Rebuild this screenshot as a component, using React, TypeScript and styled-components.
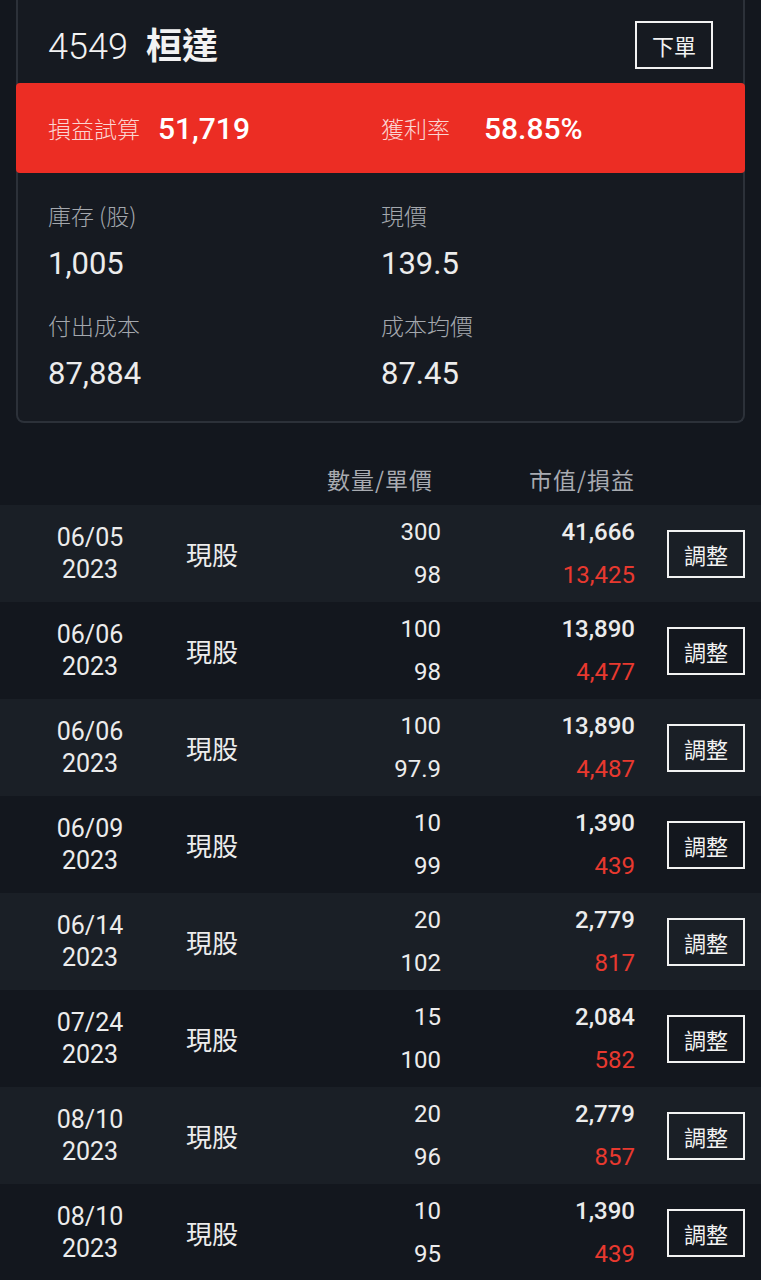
import styled, {createGlobalStyle} from "styled-components";

const GlobalStyle = createGlobalStyle`
    html, body {
        margin: 0;
        padding: 0;
        background: #13171e;
    }
    body {
        font-family: Roboto, "Noto Sans CJK TC", sans-serif;
        color: #f2f2f2;
    }
`

const Page = styled.div`
    width: 761px;
    height: 1280px;
    overflow: hidden;
    background: #13171e;
`

const Card = styled.div`
    margin: 0 16px;
    border: 2px solid #2c3139;
    border-top: none;
    border-radius: 0 0 8px 8px;
    background: #161a21;
    padding-bottom: 24px;
`

const Header = styled.div`
    display: flex;
    align-items: center;
    justify-content: space-between;
    height: 83px;
    padding: 0 30px 0 30px;
    box-sizing: border-box;
`

const Title = styled.div`
    display: flex;
    align-items: baseline;
    gap: 18px;
    font-size: 36px;
    font-weight: 300;
    padding-top: 2px;

    b {
        font-weight: 700;
        font-size: 36px;
        font-family: "Noto Sans CJK TC", sans-serif;
    }
`

const OutlineButton = styled.button`
    width: ${p => p.$w}px;
    height: 48px;
    margin-top: ${p => p.$top || 0}px;
    background: transparent;
    border: 2px solid #f2f2f2;
    color: #f2f2f2;
    font-family: "Noto Sans CJK TC", sans-serif;
    font-size: 22px;
    padding: 0;
    display: flex;
    align-items: center;
    justify-content: center;
    box-sizing: border-box;
`

const RedBar = styled.div`
    display: grid;
    grid-template-columns: 333px 1fr;
    align-items: center;
    height: 90px;
    margin: 0 -2px;
    padding: 0 32px;
    background: #ec2d24;
    border-radius: 4px;
`

const RedItem = styled.div`
    display: flex;
    align-items: center;
    gap: ${p => p.$gap}px;
`

const RedLabel = styled.span`
    font-family: "Noto Sans CJK TC", sans-serif;
    font-size: 23px;
    font-weight: 300;
    color: #fbd5d2;
`

const RedValue = styled.span`
    font-size: 30px;
    font-weight: 500;
    color: #ffffff;
`

const Stats = styled.div`
    display: grid;
    grid-template-columns: 333px 1fr;
    row-gap: 22px;
    padding: 26px 30px 0;
`

const Stat = styled.div`
    display: flex;
    flex-direction: column;
    gap: 10px;
`

const StatLabel = styled.span`
    font-family: "Noto Sans CJK TC", sans-serif;
    font-size: 23px;
    font-weight: 300;
    color: #a4a8ae;
    line-height: 32px;
`

const StatValue = styled.span`
    font-size: 31px;
    color: #ececec;
    line-height: 46px;
`

const TableHead = styled.div`
    display: grid;
    grid-template-columns: 441px 194px;
    align-items: center;
    height: 82px;
    padding-top: 30px;
    box-sizing: border-box;
    font-family: "Noto Sans CJK TC", sans-serif;
    font-size: 23px;
    letter-spacing: 1px;
    color: #a8abb1;

    span {
        text-align: right;
    }
    span:first-child {
        padding-right: 8px;
    }
`

const Row = styled.div`
    display: grid;
    grid-template-columns: 180px 90px 171px 194px 1fr;
    align-items: center;
    height: 97px;
    background: ${p => p.$alt ? "#13171e" : "#1a1f26"};
`

const DateCell = styled.div`
    display: flex;
    flex-direction: column;
    align-items: center;
    font-size: 25px;
    line-height: 32px;
    color: #ececec;
`

const TypeCell = styled.div`
    font-family: "Noto Sans CJK TC", sans-serif;
    font-size: 26px;
    color: #ececec;
    padding-left: 6px;
`

const NumCell = styled.div`
    display: flex;
    flex-direction: column;
    align-items: flex-end;
    gap: 9px;
    font-size: 24px;
    line-height: 34px;
`

const Num = styled.span`
    color: ${p => p.$red ? "#e8392f" : "#ececec"};
    font-weight: ${p => p.$bold ? 500 : 400};
`

const ActionCell = styled.div`
    display: flex;
    justify-content: flex-end;
    padding-right: 16px;
`

const rows = [
    ["06/05", "300", "98", "41,666", "13,425"],
    ["06/06", "100", "98", "13,890", "4,477"],
    ["06/06", "100", "97.9", "13,890", "4,487"],
    ["06/09", "10", "99", "1,390", "439"],
    ["06/14", "20", "102", "2,779", "817"],
    ["07/24", "15", "100", "2,084", "582"],
    ["08/10", "20", "96", "2,779", "857"],
    ["08/10", "10", "95", "1,390", "439"],
];

export default function App() {
    return (
        <Page>
            <GlobalStyle/>
            <Card>
                <Header>
                    <Title>4549 <b>桓達</b></Title>
                    <OutlineButton $w={78} $top={6}>下單</OutlineButton>
                </Header>
                <RedBar>
                    <RedItem $gap={18}>
                        <RedLabel>損益試算</RedLabel>
                        <RedValue>51,719</RedValue>
                    </RedItem>
                    <RedItem $gap={34}>
                        <RedLabel>獲利率</RedLabel>
                        <RedValue>58.85%</RedValue>
                    </RedItem>
                </RedBar>
                <Stats>
                    <Stat><StatLabel>庫存 (股)</StatLabel><StatValue>1,005</StatValue></Stat>
                    <Stat><StatLabel>現價</StatLabel><StatValue>139.5</StatValue></Stat>
                    <Stat><StatLabel>付出成本</StatLabel><StatValue>87,884</StatValue></Stat>
                    <Stat><StatLabel>成本均價</StatLabel><StatValue>87.45</StatValue></Stat>
                </Stats>
            </Card>
            <TableHead>
                <span>數量/單價</span>
                <span>市值/損益</span>
            </TableHead>
            {rows.map((r, i) => (
                <Row key={i} $alt={i % 2 === 1}>
                    <DateCell><span>{r[0]}</span><span>2023</span></DateCell>
                    <TypeCell>現股</TypeCell>
                    <NumCell><Num>{r[1]}</Num><Num>{r[2]}</Num></NumCell>
                    <NumCell><Num $bold>{r[3]}</Num><Num $red>{r[4]}</Num></NumCell>
                    <ActionCell><OutlineButton $w={78}>調整</OutlineButton></ActionCell>
                </Row>
            ))}
        </Page>
    );
}
